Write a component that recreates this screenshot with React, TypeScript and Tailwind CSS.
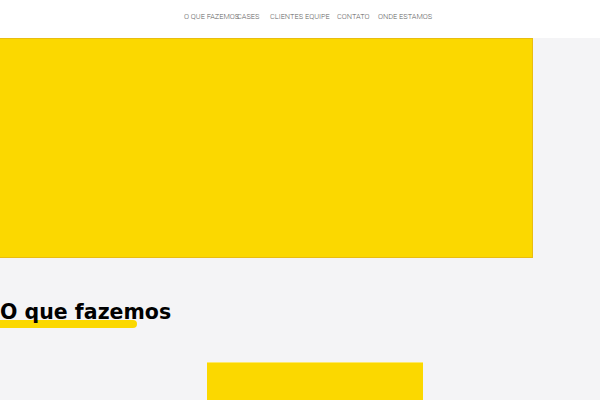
import React from 'react';

// Top navigation items, widths tuned so the labels sit where the original menu put them
const NAV_ITEMS = [
  { label: 'O QUE FAZEMOS', width: 'w-[53px]' },
  { label: 'CASES', width: 'w-[33px]' },
  { label: 'CLIENTES', width: 'w-[35px]' },
  { label: 'EQUIPE', width: 'w-[32px]' },
  { label: 'CONTATO', width: 'w-[41px]' },
  { label: 'ONDE ESTAMOS', width: 'w-[60px]' },
];

const Header = () => (
  <header className="h-[38px] bg-white flex items-center">
    <nav className="flex pl-[184px] pb-[4px]">
      {NAV_ITEMS.map((item) => (
        <a
          key={item.label}
          href="#"
          className={`${item.width} whitespace-nowrap text-[7.4px] text-[#606060] font-['Roboto',sans-serif] font-light`}
        >
          {item.label}
        </a>
      ))}
    </nav>
  </header>
);

export default function App() {
  return (
    <div className="w-[600px] h-[400px] overflow-hidden bg-[#f4f4f6]">
      <Header />
      <div className="w-[533px] h-[220px] bg-[#fbd800] border-t border-r border-b border-[#e9bd10]" />
      <section className="pt-[39px]">
        <div className="relative inline-block">
          <div className="absolute left-0 top-[23px] w-[137px] h-[8px] bg-[#fbd800] rounded-r-[4px]" />
          <h2 className="relative text-[20.5px] font-bold leading-[30px] text-black font-['DejaVu_Sans',sans-serif]">
            O que fazemos
          </h2>
        </div>
        <div className="mt-[35px] ml-[207px] w-[216px] h-[60px] bg-[#fbd800] border-t border-[#fde96a]" />
      </section>
    </div>
  );
}
